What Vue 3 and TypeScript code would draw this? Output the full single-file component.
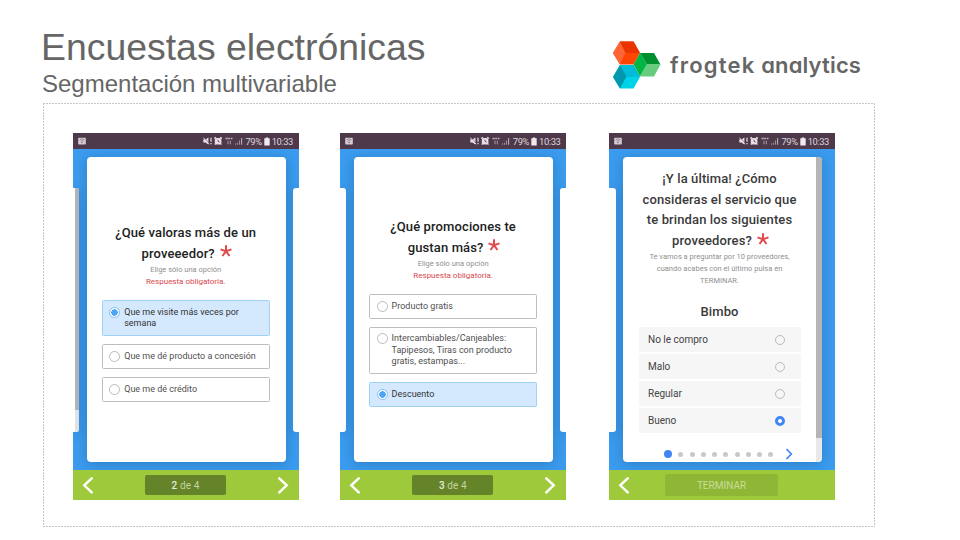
<script setup lang="ts">
interface Option { lines: string[]; selected?: boolean }
interface Screen {
  id: string
  title: string[]
  hint: string[]
  required?: boolean
  options?: Option[]
  provider?: string
  ratings?: Option[]
  step?: string
}

const screens: Screen[] = [
  {
    id: 'value',
    title: ['¿Qué valoras más de un', 'proveeedor?'],
    hint: ['Elige sólo una opción'],
    required: true,
    options: [
      { lines: ['Que me visite más veces por', 'semana'], selected: true },
      { lines: ['Que me dé producto a concesión'] },
      { lines: ['Que me dé crédito'] },
    ],
    step: '2',
  },
  {
    id: 'promo',
    title: ['¿Qué promociones te', 'gustan más?'],
    hint: ['Elige sólo una opción'],
    required: true,
    options: [
      { lines: ['Producto gratis'] },
      { lines: ['Intercambiables/Canjeables:', 'Tapipesos, Tiras con producto', 'gratis, estampas...'] },
      { lines: ['Descuento'], selected: true },
    ],
    step: '3',
  },
  {
    id: 'service',
    title: ['¡Y la última! ¿Cómo', 'consideras el servicio que', 'te brindan los siguientes', 'proveedores?'],
    hint: ['Te vamos a preguntar por 10 proveedores,', 'cuando acabes con el último pulsa en', 'TERMINAR.'],
    provider: 'Bimbo',
    ratings: [
      { lines: ['No le compro'] },
      { lines: ['Malo'] },
      { lines: ['Regular'] },
      { lines: ['Bueno'], selected: true },
    ],
  },
]
</script>

<template>
  <main class="slide">
    <header class="head">
      <div class="titles">
        <h1>Encuestas electrónicas</h1>
        <h2>Segmentación multivariable</h2>
      </div>
      <div class="brand">
        <svg class="logo" width="48" height="48" viewBox="0 0 48 48">
          <path d="M7 .5H20.500L27 12L20.500 23.500H7L0 12Z" fill="#ff4500" />
          <path d="M0 12L7 .5L12.500 11.500L7 23.500Z" fill="#ff6434" />
          <path d="M7 .5H20.500L27 12H12.500Z" fill="#e93400" />
          <path d="M7 24H20.500L27 36L20.500 47.500H7L0 36Z" fill="#00d3e8" />
          <path d="M7 24H20.500L27 36L13 36Z" fill="#00bcd8" />
          <path d="M7 24L13.500 35.500L7 47.500L0 36Z" fill="#0098ae" />
          <path d="M27 12L34 23.500L27 35.500L20.500 23.500Z" fill="#00b543" />
          <path d="M27 12H41L47.500 23.500H34Z" fill="#008f2e" />
          <path d="M34 23.500H47.500L41 35.500H27Z" fill="#66cc7e" />
        </svg>
        <span class="brand-name"><span class="wide">frogtek</span> <span>analytics</span></span>
      </div>
    </header>

    <section class="frame">
      <article v-for="s in screens" :key="s.id" class="phone" :class="s.id">
        <div class="status">
          <svg class="cast" width="8" height="8" viewBox="0 0 8 8">
            <rect x=".2" y=".7" width="7.600" height="6.800" rx=".8" fill="#d5ccd3" />
            <path d="M1.600 2.700Q4 1.200 6.400 2.700M2.600 4.100Q4 3.300 5.400 4.100" fill="none" stroke="#8a7785" stroke-width=".8" />
            <path d="M3.200 5.100H4.800L4 6.200Z" fill="#66505f" />
          </svg>
          <span class="spring"></span>
          <svg class="indicators" width="40" height="10" viewBox="0 0 40 10">
            <path d="M.3 3.600H2.400L5.400 1.600V8.400L2.400 6.400H.3Z" fill="#e8e0e6" />
            <path d="M1.200 1.500L6.300 7.700" stroke="#4e394b" stroke-width=".5" />
            <path d="M.3 1.600L5.900 8.200" stroke="#e8e0e6" stroke-width="1" />
            <path d="M8 1.800V5.800M8 6.900V8.300" stroke="#e8e0e6" stroke-width="1.200" />
            <rect x="11.800" y="1.900" width="6.600" height="6.600" rx="2" fill="#e8e0e6" />
            <path d="M11.400 2.600L12.900 1.300M18.800 2.600L17.300 1.300M11.700 8.500L12.800 7.500M18.500 8.500L17.400 7.500" stroke="#e8e0e6" stroke-width="1.400" />
            <path d="M15 3.700V5.400L16.600 6.100" fill="none" stroke="#4e394b" stroke-width=".8" />
            <path d="M22.500 2.600H24.800M25.300 2.600H27.200M27.900 2.600H29.500" stroke="#bdb0ba" stroke-width="1.500" />
            <path d="M25 4.700V8.300M27.300 4.700V8.300" fill="none" stroke="#ab9da8" stroke-width="1" />
            <path d="M32.500 7.400V8.700M34.500 6.800V8.700M36.500 4.500V8.700" stroke="#9c8d98" stroke-width="1.100" />
            <path d="M38.600 2V8.700" stroke="#b8abb5" stroke-width="1.100" />
          </svg>
          <span class="percent">79%</span>
          <svg class="battery" width="6" height="9" viewBox="0 0 6 9">
            <path d="M1.800 .4H4.200V1.200H5.700V8.400H.3V1.200H1.800Z" fill="#efe9ee" />
          </svg>
          <span class="clock">10:33</span>
        </div>

        <div class="deck">
          <div class="side left"><i v-if="s.id === 'value'" class="bar"></i></div>
          <div class="card">
            <div class="content">
              <h3>
                <span v-for="(line, i) in s.title" :key="line" class="line">
                  {{ line }}
                  <svg v-if="i === s.title.length - 1" class="star" width="12" height="12" viewBox="0 0 12 12">
                    <path d="M6 6.200V.3M6 6.200L.5 4.400M6 6.200L11.500 4.400M6 6.200L2.500 11M6 6.200L9.500 11" stroke="#e04a4d" stroke-width="2" />
                  </svg>
                </span>
              </h3>
              <p class="hint"><span v-for="line in s.hint" :key="line" class="line">{{ line }}</span></p>
              <p v-if="s.required" class="required">Respuesta obligatoria.</p>

              <ul v-if="s.options" class="options">
                <li v-for="o in s.options" :key="o.lines[0]" :class="{ on: o.selected }">
                  <span class="radio"></span>
                  <span class="label"><span v-for="line in o.lines" :key="line" class="line">{{ line }}</span></span>
                </li>
              </ul>

              <template v-if="s.ratings">
                <h4>{{ s.provider }}</h4>
                <ul class="ratings">
                  <li v-for="r in s.ratings" :key="r.lines[0]" :class="{ on: r.selected }">
                    <span>{{ r.lines[0] }}</span><span class="ring"></span>
                  </li>
                </ul>
                <div class="pager">
                  <i v-for="n in 10" :key="n" :class="{ on: n === 1 }"></i>
                  <svg width="8" height="12" viewBox="0 0 8 12"><path d="M1.500 1L6.300 6L1.500 11" fill="none" stroke="#4285f4" stroke-width="1.700" /></svg>
                </div>
              </template>
            </div>
            <i v-if="s.ratings" class="bar"></i>
          </div>
          <div v-if="!s.ratings" class="side right"></div>
        </div>

        <footer class="nav">
          <svg class="arrow" width="12" height="18" viewBox="0 0 12 18"><path d="M9.700 2.300L2.300 9.300L9.700 16.300" fill="none" stroke="#fff" stroke-width="2.500" stroke-linecap="round" /></svg>
          <span v-if="s.step" class="step"><b>{{ s.step }}</b>&nbsp;de 4</span>
          <span v-else class="finish">TERMINAR</span>
          <svg class="arrow" :class="{ off: !s.step }" width="12" height="18" viewBox="0 0 12 18"><path d="M2.300 2.300L9.700 9.300L2.300 16.300" fill="none" stroke="#fff" stroke-width="2.500" stroke-linecap="round" /></svg>
        </footer>
      </article>
    </section>
  </main>
</template>

<style>
body { margin: 0; background: #fff; }
</style>

<style scoped>
* { box-sizing: border-box; }
h1, h2, h3, h4, p, ul { margin: 0; padding: 0; font-weight: 400; }
ul { list-style: none; }
.slide { width: 960px; height: 540px; padding: 0 85px 0 43px; background: #fff; overflow: hidden; font-family: Roboto, "Liberation Sans", sans-serif; }
.head { height: 103px; display: flex; justify-content: space-between; }
.titles { padding-top: 26px; margin-left: -2px; font-family: "Liberation Sans", Arial, sans-serif; color: #666; white-space: nowrap; }
h1 { font-size: 37.400px; line-height: 43px; }
h2 { font-size: 24px; line-height: 30px; margin-left: 1px; }
.brand { display: flex; width: 262px; padding-top: 41px; gap: 9px; }
.logo { flex: none; }
.brand-name { font-family: Inter, "Liberation Sans", sans-serif; font-weight: 600; font-feature-settings: "cv11"; font-size: 22px; letter-spacing: .15px; line-height: 48px; color: #666; white-space: nowrap; }
.wide { letter-spacing: 1.200px; }

.frame {
  width: 832px; height: 424px; padding: 30px 0 0 30px; display: flex; gap: 42px;
  background:
    repeating-linear-gradient(90deg, #c6c6c6 0 2px, transparent 2px 3px) 0 0 / 100% 1px no-repeat,
    repeating-linear-gradient(90deg, #c6c6c6 0 2px, transparent 2px 3px) 0 100% / 100% 1px no-repeat,
    repeating-linear-gradient(#c6c6c6 0 2px, transparent 2px 3px) 0 0 / 1px 100% no-repeat,
    repeating-linear-gradient(#c6c6c6 0 2px, transparent 2px 3px) 100% 0 / 1px 100% no-repeat;
}
.phone { width: 226px; height: 367px; flex: none; display: flex; flex-direction: column; overflow: hidden; }
.phone.promo { margin: 0 .6px 0 -.6px; }
.status { height: 16px; flex: none; background: #4e394b; display: flex; align-items: center; padding: 0 6px 0 5px; color: #ddd5db; font-size: 9.400px; letter-spacing: -.4px; }
.spring { flex: 1; }
.percent { margin-left: 2.500px; }
.battery { margin: 0 2px; }

.deck { flex: 1; background: #3a9bef; display: flex; padding-top: 8px; overflow: hidden; }
.side { width: 6px; height: 244px; margin-top: 31px; flex: none; background: #fff; box-shadow: 0 2px 13px rgba(0, 0, 0, .16); display: flex; justify-content: flex-end; }
.side.left { border-radius: 0 3px 3px 0; overflow: visible; }
.service .side.left { width: 7px; margin-right: -1px; }
.side.right { border-radius: 3px 0 0 3px; }
.side .bar { width: 4px; border-radius: 0 3px 3px 0; background: linear-gradient(#b5b5b5 222px, #e4e4e4 222px); }
.card { width: 199px; height: 305px; margin: 0 7px 0 8px; flex: none; background: #fff; border-radius: 4px; box-shadow: 0 2px 13px rgba(0, 0, 0, .18); display: flex; overflow: hidden; }
.content { flex: 1; min-width: 0; padding: 66.200px 16.300px 0 14.700px; }
.promo .content { padding-top: 60.200px; }
.service .content { padding: 12.400px 15.500px 0 15.500px; }
.card > .bar { width: 6px; background: linear-gradient(#b5b5b5 281px, #e8e8e8 281px); }
.line { display: block; white-space: nowrap; }
h3 { text-align: center; font-size: 13px; line-height: 20.500px; font-weight: 500; color: #222; letter-spacing: .12px; }
h3 .line { display: flex; align-items: center; justify-content: center; gap: 5px; }
h3 .line:last-child { padding-left: 2px; }
.star { margin-top: -5px; }
.hint { text-align: center; font-size: 7.500px; line-height: 12px; color: #8f8f8f; }
.required { text-align: center; font-size: 8px; line-height: 12px; color: #d9484c; }
.options { margin-top: 11.800px; display: flex; flex-direction: column; gap: 7.700px; }
.options li { border: 1px solid #bdbdbd; border-radius: 1.500px; padding: 5.800px 6.500px; display: flex; gap: 4px; font-size: 9px; line-height: 11.400px; color: #505050; }
.options li.on { background: #d5e9fe; border-color: #9fd1f5; color: #333; }
.radio { width: 11px; height: 11px; border: 1px solid #bbb; border-radius: 50%; background: #fff; flex: none; }
.on .radio { border-color: #83c0f8; background: radial-gradient(circle, #4da5f8 3px, #fff 3.500px); }
.service h3 { color: #3a3a3a; }
.service .hint { line-height: 11.700px; }
h4 { text-align: center; font-size: 13px; line-height: 18px; font-weight: 500; color: #3a3a3a; margin: 16.600px 0 6px; letter-spacing: .1px; }
.ratings { display: flex; flex-direction: column; gap: 2px; }
.ratings li { height: 25px; background: #f6f6f6; padding: 0 16px 0 9.500px; display: flex; align-items: center; justify-content: space-between; font-size: 10px; color: #444; }
.ring { width: 10px; height: 10px; border: 1px solid #bbb; border-radius: 50%; }
.on .ring { border: 3px solid #4285f4; background: #fff; }
.pager { height: 14px; margin: 14px 8px 0 25.500px; display: flex; align-items: center; justify-content: space-between; }
.pager i { width: 5px; height: 5px; border-radius: 50%; background: #c8c8c8; }
.pager i.on { width: 8px; height: 8px; background: #4285f4; }
.pager svg { margin-left: 5px; }
.nav { height: 30px; flex: none; background: #9ec93b; display: flex; align-items: center; justify-content: space-between; padding: 0 10px 0 9px; }
.step, .finish { display: flex; align-items: center; justify-content: center; border-radius: 2px; font-size: 10px; }
.step { width: 81px; height: 20px; background: #65842a; color: #c3d4a0; letter-spacing: .1px; }
.step b { font-weight: 500; color: #e3ebd4; }
.finish { width: 113px; height: 22px; background: #8fb735; color: #c9dc9d; }
.arrow.off { visibility: hidden; }
</style>
